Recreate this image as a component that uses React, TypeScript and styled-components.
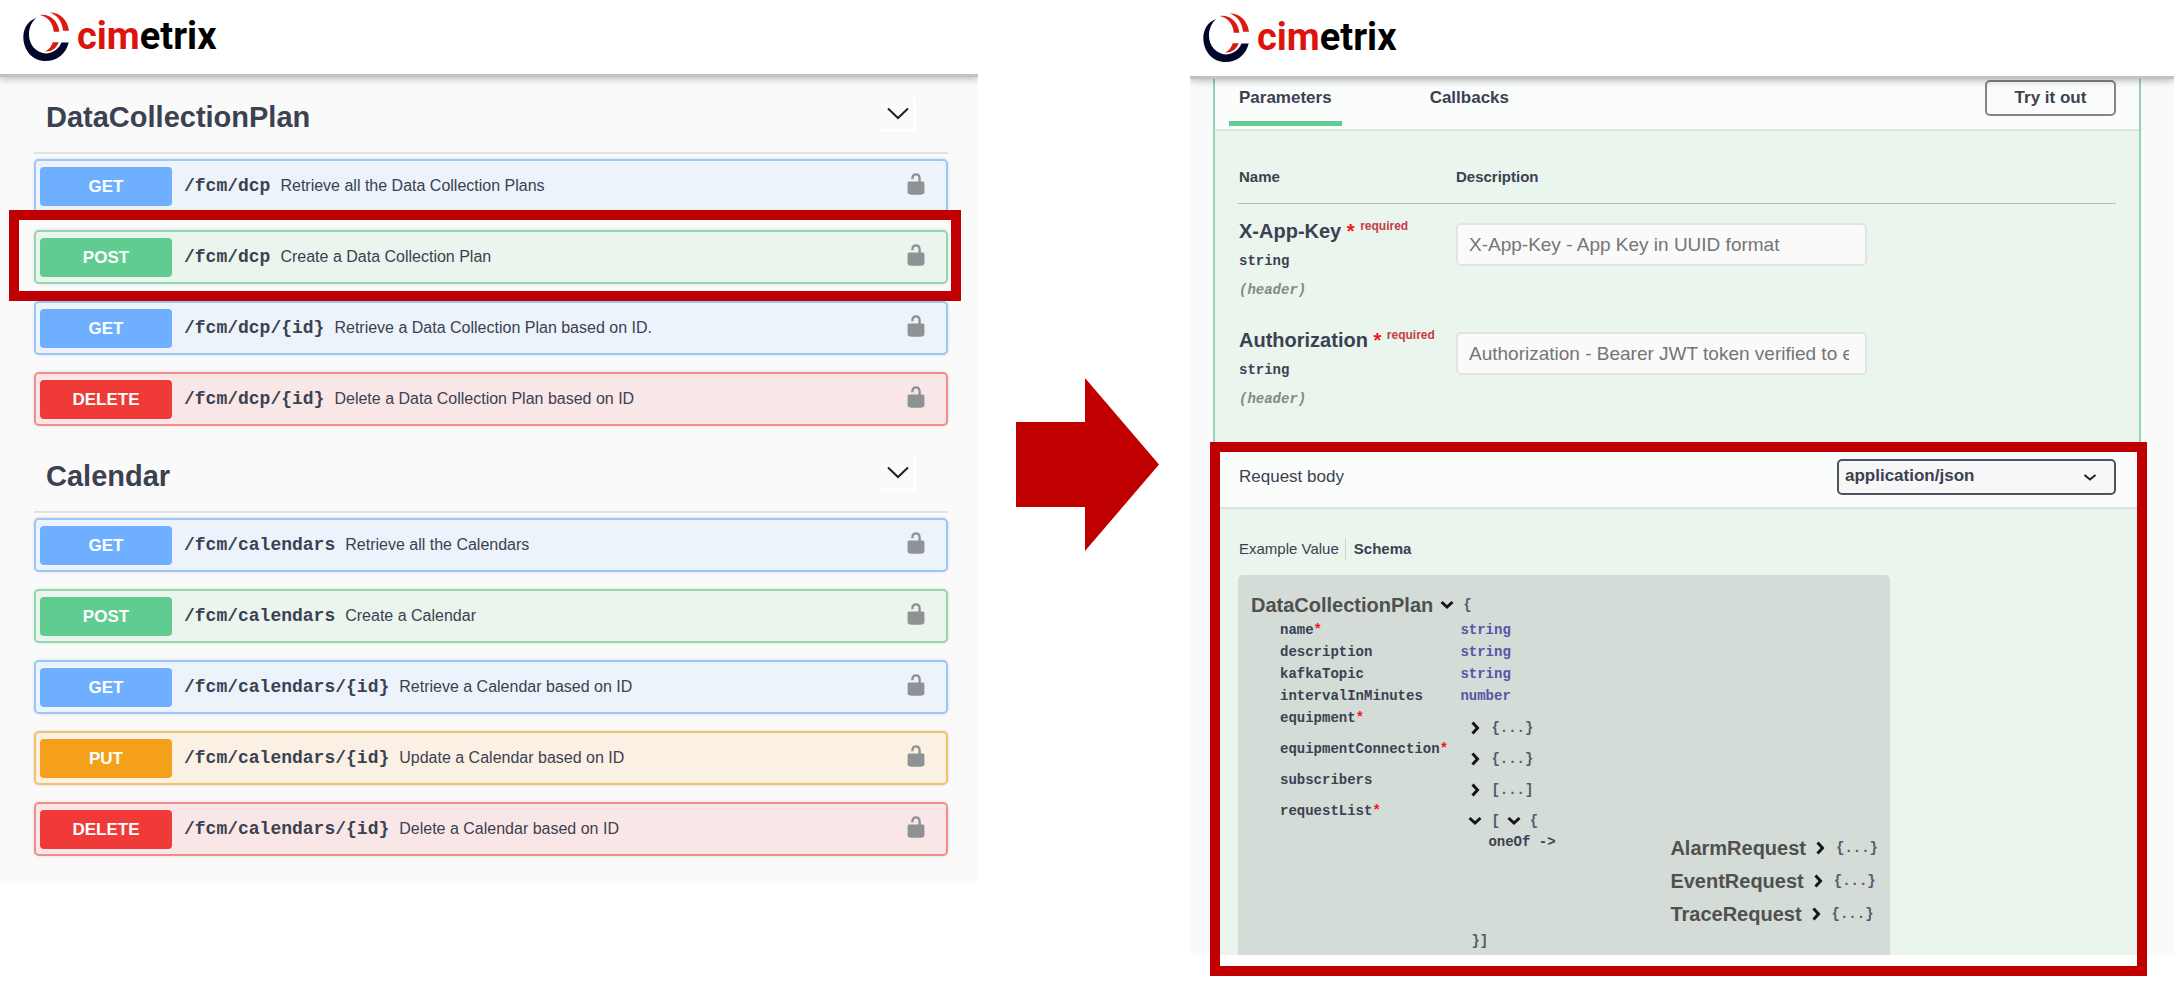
import React from "react";
import styled, { createGlobalStyle, css } from "styled-components";

const sans = `"Liberation Sans", Arial, sans-serif`;
const mono = `"Liberation Mono", "Courier New", monospace`;
const ink = "#3b4151";
const alertRed = "#c00000";

const GlobalStyle = createGlobalStyle`
  *, *::before, *::after { box-sizing: border-box; }
  body { margin: 0; background: #fff; color: ${ink}; font-family: ${sans}; }
  button, input, select { font-family: inherit; color: inherit; }
  button { border: 0; background: none; padding: 0; cursor: pointer; }
`;

/* ---------- page frame ---------- */

const Page = styled.main`
  display: grid;
  grid-template-columns: 978fr 212fr 984fr 7fr;
  align-items: start;
  min-height: 100vh;
  padding-bottom: 24px;
`;

const Panel = styled.section`
  min-width: 0;
  background: #fafafa;
`;

const Header = styled.header<{ $tall?: boolean }>`
  display: flex;
  align-items: center;
  gap: 7px;
  height: ${(p) => (p.$tall ? 79 : 77)}px;
  padding: 0 ${(p) => (p.$tall ? 13 : 23)}px 1px;
  background: #fff;
  border-bottom: 3px solid #c2c2c2;
  box-shadow: 0 2px 7px rgba(0, 0, 0, 0.25);
  position: relative;
  clip-path: inset(0 0 -12px 0);
`;

const Brand = styled.span`
  padding-bottom: 2px;
  font: 700 38px/52px Roboto, "Open Sans", sans-serif;
  color: #000;
`;

const BrandAccent = styled.span`
  color: #dd140d;
`;

const highlight = css`
  position: relative;
  &::after {
    content: "";
    position: absolute;
    border: 10px solid ${alertRed};
    pointer-events: none;
  }
`;

const ArrowColumn = styled.div`
  display: flex;
  justify-content: center;
  padding: 378px 0 0 7px;
`;

/* ---------- operation list ---------- */

const Tag = styled.section`
  padding: 0 30px 0 34px;
  & + & {
    margin-top: 10px;
  }
`;

const TagHeader = styled.div`
  display: flex;
  align-items: center;
  justify-content: space-between;
  height: 77px;
  padding: 5px 32px 0 12px;
  border-bottom: 2px solid #e2e2e3;
`;

const TagTitle = styled.h2`
  margin: 0;
  font-size: 29px;
  line-height: 36px;
`;

const Expand = styled.button`
  display: flex;
  align-items: center;
  justify-content: center;
  width: 34px;
  height: 34px;
  margin-bottom: 5px;
  border-right: 3px solid #fff;
  border-bottom: 3px solid #fff;
`;

const Operations = styled.ul`
  display: flex;
  flex-direction: column;
  gap: 17px;
  margin: 0;
  padding: 5px 0 0;
  list-style: none;
`;

type Method = "GET" | "POST" | "PUT" | "DELETE";

const palette: Record<Method, { main: string; line: string; back: string }> = {
  GET: { main: "#6eafff", line: "#9ac7fb", back: "#ecf3fb" },
  POST: { main: "#61cc8f", line: "#90d9b0", back: "#eaf5ee" },
  PUT: { main: "#f5a01b", line: "#f4c06c", back: "#faf1e4" },
  DELETE: { main: "#ef3a37", line: "#f38d8c", back: "#f9e7e7" },
};

const Operation = styled.li<{ $method: Method; $marked?: boolean }>`
  display: flex;
  align-items: center;
  height: 54px;
  padding: 0 18px 0 4px;
  border: 2px solid ${(p) => palette[p.$method].line};
  border-radius: 5px;
  background: ${(p) => palette[p.$method].back};
  box-shadow: 0 0 3px rgba(0, 0, 0, 0.14);
  ${(p) =>
    p.$marked &&
    css`
      ${highlight}
      &::after {
        inset: -22px -15px -19px -27px;
      }
    `}
`;

const Summary = styled.button`
  display: flex;
  flex: 1;
  align-items: center;
  min-width: 0;
  text-align: left;
`;

const Badge = styled.span<{ $method: Method }>`
  flex: none;
  width: 132px;
  border-radius: 4px;
  background: ${(p) => palette[p.$method].main};
  color: #fff;
  font-size: 17px;
  font-weight: 700;
  line-height: 39px;
  text-align: center;
`;

const Path = styled.span`
  margin: 0 10px 0 12px;
  font: 700 18px/24px ${mono};
`;

const Note = styled.span`
  font-size: 16px;
  line-height: 24px;
`;

const Lock = styled.button`
  display: flex;
  margin-bottom: 5px;
  color: #8e9294;
`;

/* ---------- operation detail ---------- */

const Detail = styled.div`
  margin: 0 33px 0 23px;
  border: solid #93d7b2;
  border-width: 0 2px;
  background: #eaf5ee;
`;

const Bar = styled.div`
  display: flex;
  justify-content: space-between;
  padding-right: 23px;
  background: #fbfdfc;
  border-bottom: 1px solid #dbe4de;
  box-shadow: 0 1px 2px rgba(0, 0, 0, 0.08);
`;

const TabBar = styled(Bar)`
  height: 51px;
  padding-left: 14px;
`;

const Tabs = styled.div`
  display: flex;
  align-items: flex-start;
  gap: 78px;
`;

const Tab = styled.button<{ $active?: boolean }>`
  padding: 1px 10px 5px;
  border-bottom: 5px solid ${(p) => (p.$active ? "#5fce90" : "transparent")};
  font-size: 17px;
  font-weight: 700;
  line-height: 36px;
`;

const TryButton = styled.button`
  width: 131px;
  height: 36px;
  margin-top: 1px;
  border: 2px solid #868686;
  border-radius: 5px;
  font-size: 17px;
  font-weight: 700;
`;

const Parameters = styled.div`
  padding: 37px 23px 24px;
`;

const ParamTable = styled.table`
  width: 100%;
  border-collapse: separate;
  border-spacing: 0;
  table-layout: fixed;
`;

const HeadCell = styled.th<{ $narrow?: boolean }>`
  ${(p) => p.$narrow && "width: 218px;"}
  padding: 0 0 16px ${(p) => (p.$narrow ? 1 : 0)}px;
  border-bottom: 1px solid #b4bfb9;
  font-size: 15px;
  line-height: 20px;
  text-align: left;
`;

const NameCell = styled.td`
  padding: 12px 0 9px 1px;
  vertical-align: top;
  white-space: nowrap;
`;

const ParamName = styled.label`
  display: block;
  font-size: 20px;
  font-weight: 700;
  line-height: 30px;
`;

const Star = styled.span`
  color: #f5141c;
`;

const Required = styled.sup`
  color: #c63c44;
  font-size: 12px;
  line-height: 0;
`;

const ParamType = styled.div`
  font: 700 14px/30px ${mono};
`;

const ParamIn = styled.div`
  color: #828986;
  font: italic 700 14px/28px ${mono};
`;

const InputCell = styled.td`
  padding: 19px 0 0;
  vertical-align: top;
`;

const Field = styled.input`
  display: block;
  width: 411px;
  height: 43px;
  padding: 0 16px 0 11px;
  border: 2px solid #e0e4e2;
  border-radius: 5px;
  background: #fafafa;
  font-size: 19px;
  &::placeholder {
    color: #757575;
    opacity: 1;
  }
`;

const RequestBody = styled.section`
  ${highlight}
  &::after {
    inset: -4px -8px -21px -5px;
  }
`;

const RequestBar = styled(Bar)`
  align-items: center;
  height: 62px;
  padding-left: 24px;
`;

const RequestTitle = styled.label`
  font-size: 17px;
  line-height: 24px;
`;

const SelectBox = styled.div`
  position: relative;
  width: 279px;
  svg {
    position: absolute;
    top: 8px;
    right: 16px;
    pointer-events: none;
  }
`;

const Select = styled.select`
  display: block;
  width: 100%;
  height: 36px;
  padding: 0 40px 2px 6px;
  border: 2px solid #50535f;
  border-radius: 5px;
  background: #f7f7f7;
  appearance: none;
  font-size: 17px;
  font-weight: 700;
`;

const SchemaArea = styled.div`
  padding: 30px 23px 0;
`;

const Modes = styled.div`
  display: flex;
  margin-bottom: 15px;
`;

const Mode = styled.button<{ $active?: boolean }>`
  padding: 0 6px 0 1px;
  font-size: 15px;
  font-weight: ${(p) => (p.$active ? 700 : 400)};
  line-height: 22px;
  & + & {
    padding-left: 8px;
    border-left: 1px solid #ccd6d0;
  }
`;

const Model = styled.div`
  width: 652px;
  padding: 15px 12px 3px 13px;
  border-radius: 5px 5px 0 0;
  background: #d3dcd6;
  font: 700 14px/22px ${mono};
`;

const Line = styled.div<{ $height: number }>`
  display: flex;
  align-items: center;
  height: ${(p) => p.$height}px;
`;

const ModelName = styled.span`
  margin-right: 4px;
  color: #505050;
  font: 700 20px/28px ${sans};
`;

const Toggle = styled.button`
  display: flex;
  margin-right: 6px;
`;

const Brace = styled.span<{ $gap?: boolean }>`
  ${(p) => p.$gap && "margin-right: 4px;"}
  color: #55596c;
`;

const Properties = styled.table`
  margin-left: 28px;
  border-collapse: collapse;
  td {
    padding: 0;
    vertical-align: top;
  }
  td:first-child {
    width: 184px;
    padding-left: 1px;
  }
`;

const TypeName = styled.span`
  color: #5555aa;
`;

const Nested = styled.div`
  padding: 10px 0 0 5px;
`;

const OneOf = styled.div`
  display: flex;
  padding-left: 23px;
`;

const OneOfLabel = styled.span`
  width: 182px;
`;

const Closing = styled.div`
  padding-left: 6px;
`;

/* ---------- icons ---------- */

const Mark = () => (
  <svg width="47" height="51" viewBox="70 34 142 152" aria-hidden="true">
    <path
      fill="#03062b"
      d="M110 54C86 62 71 84 71 112c0 40 29 72 67 72 35 0 62-22 70-56h-22c-7 18-24 31-44 33-31 1-54-26-54-57 0-20 8-38 22-50z"
    />
    <path
      fill="#dd1a12"
      d="M121 45c30-4 56 18 59 51h-17c-2-25-16-45-42-51zM150 37c34 0 55 25 59 56h-18c-3-27-16-47-41-56zM160 127h18c-7 18-20 29-41 28 12-6 19-16 23-28z"
    />
  </svg>
);

const Logo = ({ tall }: { tall?: boolean }) => (
  <Header $tall={tall}>
    <Mark />
    <Brand>
      <BrandAccent>cim</BrandAccent>etrix
    </Brand>
  </Header>
);

const BigChevron = () => (
  <svg width="22" height="13" viewBox="0 0 22 13" fill="none" stroke="#222" strokeWidth="2">
    <path d="M1 1.5l10 9.5 10-9.5" />
  </svg>
);

const Unlock = () => (
  <svg width="24" height="24" viewBox="0 0 20 20" fill="currentColor">
    <path d="M15.8 8H14V5.6C14 2.7 12.7 1 10 1S6 2.7 6 5.6V6h2v-.8C8 3.75 8.8 3 10 3s2 .75 2 2.2V8H4c-.55 0-1 .65-1 1.2V17c0 .55.43 1.14.95 1.3l1.2.4c.52.16 1.4.3 1.95.3h5.8c.55 0 1.43-.14 1.95-.3l1.2-.4c.52-.16.95-.75.95-1.3V9.2c0-.55-.65-1.2-1.2-1.2z" />
  </svg>
);

const SmallChevron = ({ open }: { open?: boolean }) => (
  <svg width="20" height="20" viewBox="0 0 20 20" fill="none" stroke="#151515" strokeWidth="3">
    <path d={open ? "M4.5 7l5.5 5 5.5-5" : "M7.5 4.5l5 5.5-5 5.5"} />
  </svg>
);

/* ---------- content ---------- */

type Op = { method: Method; path: string; note: string; marked?: boolean };

const groups: { name: string; ops: Op[] }[] = [
  {
    name: "DataCollectionPlan",
    ops: [
      { method: "GET", path: "/fcm/dcp", note: "Retrieve all the Data Collection Plans" },
      { method: "POST", path: "/fcm/dcp", note: "Create a Data Collection Plan", marked: true },
      { method: "GET", path: "/fcm/dcp/{id}", note: "Retrieve a Data Collection Plan based on ID." },
      { method: "DELETE", path: "/fcm/dcp/{id}", note: "Delete a Data Collection Plan based on ID" },
    ],
  },
  {
    name: "Calendar",
    ops: [
      { method: "GET", path: "/fcm/calendars", note: "Retrieve all the Calendars" },
      { method: "POST", path: "/fcm/calendars", note: "Create a Calendar" },
      { method: "GET", path: "/fcm/calendars/{id}", note: "Retrieve a Calendar based on ID" },
      { method: "PUT", path: "/fcm/calendars/{id}", note: "Update a Calendar based on ID" },
      { method: "DELETE", path: "/fcm/calendars/{id}", note: "Delete a Calendar based on ID" },
    ],
  },
];

const OperationsPanel = styled(Panel)`
  padding-bottom: 25px;
`;

const params = [
  { name: "X-App-Key", hint: "X-App-Key - App Key in UUID format" },
  { name: "Authorization", hint: "Authorization - Bearer JWT token verified to ensure access" },
];

const simpleProps = [
  { name: "name", type: "string", required: true },
  { name: "description", type: "string" },
  { name: "kafkaTopic", type: "string" },
  { name: "intervalInMinutes", type: "number" },
];

const nestedProps = [
  { name: "equipment", body: "{...}", required: true },
  { name: "equipmentConnection", body: "{...}", required: true },
  { name: "subscribers", body: "[...]" },
];

const Caret = ({ open, label }: { open?: boolean; label: string }) => (
  <Toggle aria-label={label}>
    <SmallChevron open={open} />
  </Toggle>
);

export default function App() {
  return (
    <>
      <GlobalStyle />
      <Page>
        <OperationsPanel>
          <Logo />
          {groups.map((group) => (
            <Tag key={group.name}>
              <TagHeader>
                <TagTitle>{group.name}</TagTitle>
                <Expand aria-label={`Collapse ${group.name}`}>
                  <BigChevron />
                </Expand>
              </TagHeader>
              <Operations>
                {group.ops.map((op) => (
                  <Operation key={op.method + op.path} $method={op.method} $marked={op.marked}>
                    <Summary>
                      <Badge $method={op.method}>{op.method}</Badge>
                      <Path>{op.path}</Path>
                      <Note>{op.note}</Note>
                    </Summary>
                    <Lock aria-label="Authorize">
                      <Unlock />
                    </Lock>
                  </Operation>
                ))}
              </Operations>
            </Tag>
          ))}
        </OperationsPanel>

        <ArrowColumn>
          <svg width="143" height="173" viewBox="0 0 143 173" aria-hidden="true">
            <path fill={alertRed} d="M0 44h69V0l74 86.5L69 173v-44H0z" />
          </svg>
        </ArrowColumn>

        <Panel>
          <Logo tall />
          <Detail>
            <TabBar>
              <Tabs>
                <Tab $active>Parameters</Tab>
                <Tab>Callbacks</Tab>
              </Tabs>
              <TryButton>Try it out</TryButton>
            </TabBar>
            <Parameters>
              <ParamTable>
                <thead>
                  <tr>
                    <HeadCell $narrow>Name</HeadCell>
                    <HeadCell>Description</HeadCell>
                  </tr>
                </thead>
                <tbody>
                  {params.map((param) => (
                    <tr key={param.name}>
                      <NameCell>
                        <ParamName htmlFor={param.name}>
                          {param.name} <Star>*</Star> <Required>required</Required>
                        </ParamName>
                        <ParamType>string</ParamType>
                        <ParamIn>(header)</ParamIn>
                      </NameCell>
                      <InputCell>
                        <Field id={param.name} type="text" placeholder={param.hint} />
                      </InputCell>
                    </tr>
                  ))}
                </tbody>
              </ParamTable>
            </Parameters>

            <RequestBody>
              <RequestBar>
                <RequestTitle htmlFor="content-type">Request body</RequestTitle>
                <SelectBox>
                  <Select id="content-type" defaultValue="application/json">
                    <option>application/json</option>
                  </Select>
                  <svg width="20" height="20" viewBox="0 0 20 20" fill="none" stroke="#222" strokeWidth="2">
                    <path d="M4.5 8l5.5 4.5L15.5 8" />
                  </svg>
                </SelectBox>
              </RequestBar>
              <SchemaArea>
                <Modes>
                  <Mode>Example Value</Mode>
                  <Mode $active>Schema</Mode>
                </Modes>
                <Model>
                  <Line $height={29}>
                    <ModelName>DataCollectionPlan</ModelName>
                    <Caret open label="Collapse DataCollectionPlan" />
                    <Brace>{"{"}</Brace>
                  </Line>
                  <Properties>
                    <tbody>
                      {simpleProps.map((prop) => (
                        <tr key={prop.name}>
                          <td>
                            {prop.name}
                            {prop.required && <Star>*</Star>}
                          </td>
                          <td>
                            <TypeName>{prop.type}</TypeName>
                          </td>
                        </tr>
                      ))}
                      {nestedProps.map((prop) => (
                        <tr key={prop.name}>
                          <td>
                            {prop.name}
                            {prop.required && <Star>*</Star>}
                          </td>
                          <td>
                            <Nested>
                              <Line $height={21}>
                                <Caret label={`Expand ${prop.name}`} />
                                <Brace>{prop.body}</Brace>
                              </Line>
                            </Nested>
                          </td>
                        </tr>
                      ))}
                      <tr>
                        <td>
                          requestList<Star>*</Star>
                        </td>
                        <td>
                          <Nested>
                            <Line $height={21}>
                              <Caret open label="Collapse requestList" />
                              <Brace $gap>[</Brace>
                              <Caret open label="Collapse request item" />
                              <Brace>{"{"}</Brace>
                            </Line>
                            <OneOf>
                              <OneOfLabel>oneOf -&gt;</OneOfLabel>
                              <div>
                                {["AlarmRequest", "EventRequest", "TraceRequest"].map((name) => (
                                  <Line key={name} $height={33}>
                                    <ModelName>{name}</ModelName>
                                    <Caret label={`Expand ${name}`} />
                                    <Brace>{"{...}"}</Brace>
                                  </Line>
                                ))}
                              </div>
                            </OneOf>
                            <Closing>
                              <Brace>{"}]"}</Brace>
                            </Closing>
                          </Nested>
                        </td>
                      </tr>
                    </tbody>
                  </Properties>
                </Model>
              </SchemaArea>
            </RequestBody>
          </Detail>
        </Panel>
      </Page>
    </>
  );
}
